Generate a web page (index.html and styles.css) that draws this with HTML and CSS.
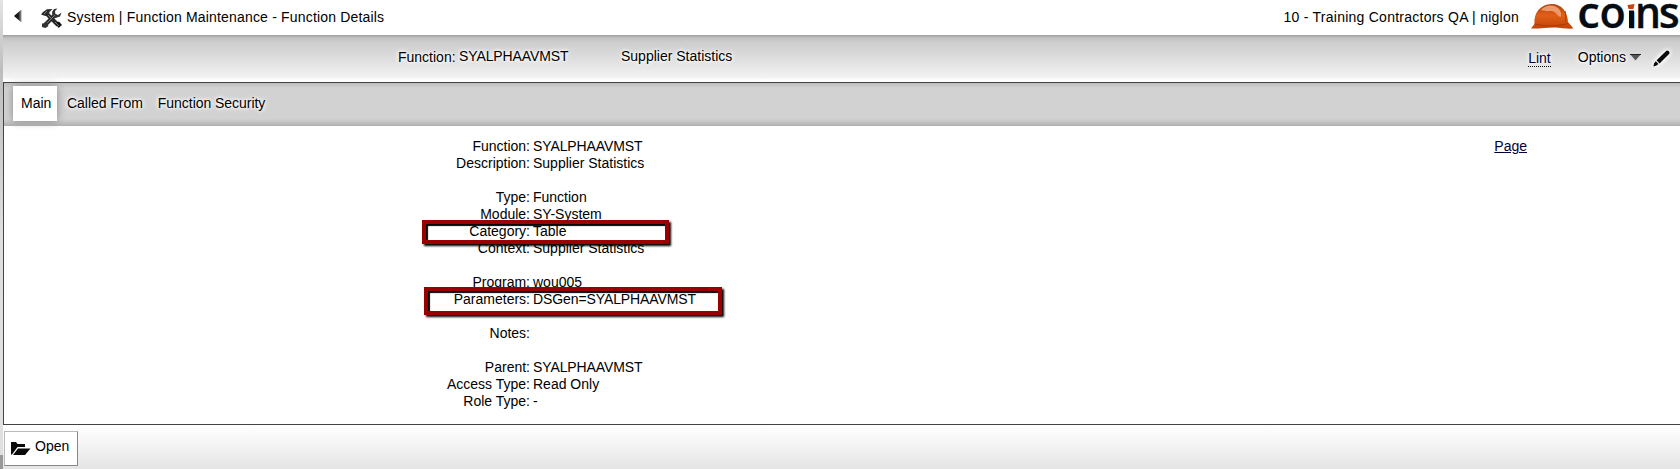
FILE: index.html
```html
<!DOCTYPE html>
<html lang="en">
<head>
<meta charset="utf-8">
<title>Function Maintenance - Function Details</title>
<link rel="stylesheet" href="styles.css">
</head>
<body>
<div class="frame">
  <div class="gutter"></div>
  <div class="app">
    <header class="topbar">
      <svg class="back" width="8" height="14" viewBox="0 0 8 14"><defs><linearGradient id="bk"><stop offset="0"/><stop offset=".6" stop-color="#222"/><stop offset="1" stop-color="#999"/></linearGradient></defs><path d="M0 7 7.500 .5v13z" fill="url(#bk)"/></svg>
      <svg class="tools" width="21" height="20" viewBox="0 0 21 20" fill="none" stroke="#2b2b2b">
        <path d="M4.500 4.500 17 17" stroke-width="4"/>
        <path d="M14 7 4 17" stroke-width="4"/>
        <path d="M0 6.500 2 4l4-2.800 5.500-.2-3 3-1 3.500-3 .5z" fill="#2b2b2b" stroke="none"/>
        <path d="M20.500 4.500 17 7l-2.700-1.200L14 3l2.500-2.500L13 1l-2 3 .5 4 3 2 4.500-1.500zM1 15.500l4.500-.5L7.500 18l-3 2-3.500-1z" fill="#333" stroke="none"/>
        <path d="M14.500 15.500 17.500 20l3.500-3-3-3.500z" fill="#111" stroke="none"/>
        <path d="M6 15 14 7M7 7l3 3M14 14l4 4M3 6l3-3" stroke="#888" stroke-width=".9"/>
      </svg>
      <span class="title">System | Function Maintenance - Function Details</span>
      <span class="user">10 - Training Contractors QA | niglon</span>
      <svg class="logo" width="149" height="31" viewBox="0 0 149 31">
        <defs><linearGradient id="hat" x2="0" y2="1"><stop offset="0" stop-color="#a8430f"/><stop offset=".45" stop-color="#e05f18"/><stop offset="1" stop-color="#c34205"/></linearGradient></defs>
        <path d="M1 28.500 4.500 24C3.500 13 10 4.500 21.500 4 32 4 37.500 12 38 22l5.500 6.500c-6 .6-12-.7-19-1C16 27.500 8 29 1 28.500z" fill="url(#hat)"/>
        <path d="M11 10c4-5 12-6 17-2 2.500 2.500 4 6 2.500 9-3-1-3.500-4-7-5.500-4-1-8 .500-12.500-1.500z" fill="#ee9a68"/>
        <path d="M4.500 24c9 2 21 3 33.500-.5M35 11c1 4 1 7 .5 11" stroke="#a53a08" stroke-width="1" fill="none"/>
        <g class="wordmark">
          <text transform="translate(47.300 28.200) scale(1.030 1)" font-size="44">c</text>
          <text transform="translate(69.600 28.200) scale(.98 1)" font-size="44">o</text>
          <text transform="translate(96.500 28.200) scale(1.300 1)" font-size="29">i</text>
          <text transform="translate(105 28.200) scale(.93 1)" font-size="44">n</text>
          <text transform="translate(128.800 28.200) scale(.98 1)" font-size="44">s</text>
        </g>
        <path d="M97 3h9v8.500h-9z" fill="#fff"/>
        <path d="M99 10.500h5V28h-5z" fill="#050c14"/>
        <path d="M97.500 5 104.500 4l-1 5H98.500z" fill="#cb440e"/>
      </svg>
    </header>
    <div class="summary">
      <span class="sum-label">Function:</span>
      <span class="sum-value">SYALPHAAVMST</span>
      <span class="sum-name">Supplier Statistics</span>
      <a class="lint">Lint</a>
      <span class="options">Options</span>
      <svg class="caret" width="11" height="7" viewBox="0 0 11 7"><path d="M0 0h11L5.500 6.500z" fill="#555"/><path d="M0 .5h11" stroke="#222"/></svg>
      <svg class="pencil" width="17" height="17" viewBox="0 0 17 17"><path d="M3.600 10.300 12.600 1.600Q14-.2 15.500 1t.8 2.800L6.500 13.500zM2.800 11.300l2.700 2.700L3.500 15.500.5 16.500 1 13.500z" fill="#0a0a0a"/></svg>
    </div>
    <section class="panel">
      <nav class="tabs"><span class="tab active">Main</span><span class="tab">Called From</span><span class="tab">Function Security</span></nav>
      <div class="content">
        <dl class="details">
          <dt>Function:</dt><dd class="code">SYALPHAAVMST</dd>
          <dt>Description:</dt><dd>Supplier Statistics</dd>
          <dt class="gap">Type:</dt><dd class="gap">Function</dd>
          <dt>Module:</dt><dd>SY-System</dd>
          <dt>Category:</dt><dd>Table</dd>
          <dt>Context:</dt><dd>Supplier Statistics</dd>
          <dt class="gap">Program:</dt><dd class="gap">wou005</dd>
          <dt>Parameters:</dt><dd class="code">DSGen=SYALPHAAVMST</dd>
          <dt class="gap">Notes:</dt><dd class="gap"></dd>
          <dt class="gap">Parent:</dt><dd class="gap code">SYALPHAAVMST</dd>
          <dt>Access Type:</dt><dd>Read Only</dd>
          <dt>Role Type:</dt><dd>-</dd>
        </dl>
        <a class="page">Page</a>
      </div>
    </section>
    <footer class="footer">
      <div class="open">
        <svg width="20" height="14" viewBox="0 0 20 14"><path d="M0 0h5l1.500 2H14v3H6.500L1 12.500H0z" fill="#0a0a0a"/><path d="M7 6.500h12.500L14 13H2z" fill="#0a0a0a"/></svg>
        <span>Open</span>
      </div>
    </footer>
  </div>
</div>
<div class="mark category-mark"></div>
<div class="mark parameters-mark"></div>
</body>
</html>
```
FILE: styles.css
```css
* { box-sizing: border-box; }
body { margin: 0; font: 14px/17px "Liberation Sans", Arial, sans-serif; color: #000; background: #fff; overflow: hidden; }
.frame { display: flex; height: 469px; }
.gutter { width: 3px; background: linear-gradient(#e4e4e4, #bdbdbd 15%, #dedede 50%, #e0e0e0 97%, #999 97%); }
.app { width: 1677px; display: flex; flex-direction: column; }
.topbar { height: 35px; display: flex; align-items: flex-start; white-space: nowrap; }
.back { margin: 9px 0 0 11px; }
.tools { margin: 8px 0 0 19px; }
.title { margin: 9px 0 0 5px; letter-spacing: .18px; }
.user { margin: 9px 11px 0 auto; letter-spacing: .25px; }
.logo { flex: none; margin-right: 1px; overflow: visible; }
.wordmark { font-family: "Open Sans", sans-serif; font-weight: 600; fill: #050c14; stroke: #050c14; stroke-width: .3; }
.summary { height: 47px; display: flex; align-items: flex-start; white-space: nowrap; background: linear-gradient(#9e9e9e, #c2c2c2 3px, #cdcdcd 7px, #dcdcdc 22px, #f2f2f2 42px, #fff 45px); text-shadow: 0 0 3px #fff, 0 0 4px #fff, 0 0 6px #fff; }
.sum-label { margin: 14px 0 0 395px; width: 61px; }
.sum-value { margin-top: 13px; width: 162px; letter-spacing: -.1px; }
.sum-name { margin-top: 13px; }
.lint { height: 17px; margin: 15px 27px 0 auto; color: #00003c; border-bottom: 1px dotted #000; line-height: 16px; text-decoration: none; }
.options { margin: 14px 4px 0 0; }
.caret { margin: 19px 12px 0 0; }
.pencil { margin: 15px 10px 0 0; overflow: visible; filter: drop-shadow(0 0 2px #fff) drop-shadow(0 0 2px #fff); }
.panel { height: 343px; border: solid #444; border-width: 1px 0 1px 1px; }
.tabs { height: 43px; display: flex; padding: 3px 0 0 9px; background: linear-gradient(#bebebe, #d2d2d2 5px, #d2d2d2 36px, #b0b0b0); text-shadow: 0 0 3px #fff, 0 0 4px #fff, 0 0 6px #fff; }
.tab { height: 35px; padding: 9px 8px 0; margin-right: 2px; }
.tab + .tab { padding-right: 5px; letter-spacing: -.04px; }
.tab.active { width: 44px; background: #fff; box-shadow: 0 0 8px #888; }
.content { display: flex; justify-content: space-between; padding-top: 12px; }
.details { margin: 0; display: grid; grid-template-columns: 526px auto; column-gap: 3px; grid-auto-rows: auto; }
dt, dd { margin: 0; height: 17px; line-height: 17px; }
dt { text-align: right; }
.code { letter-spacing: -.1px; }
.gap { height: 34px; padding-top: 17px; }
.page { margin-right: 153px; height: 17px; color: #00003c; text-decoration: underline; }
.footer { height: 44px; padding: 6px 0 0 1px; background: linear-gradient(#fff, #f4f4f4 45%, #e4e4e4); }
.open { width: 74px; height: 35px; display: flex; align-items: flex-start; background: #fff; border: 1px solid #bbb; border-right-color: #888; border-bottom-color: #888; }
.open svg { margin: 10px 0 0 6px; }
.open span { margin: 6px 0 0 4px; }
.mark { position: absolute; border: 4px solid #9b0000; box-shadow: 2px 2px 2px #000, inset 2px 2px 1px #000; }
.category-mark { left: 422px; top: 220px; width: 247px; height: 24px; }
.parameters-mark { left: 424px; top: 287px; width: 298px; height: 28px; }
```
